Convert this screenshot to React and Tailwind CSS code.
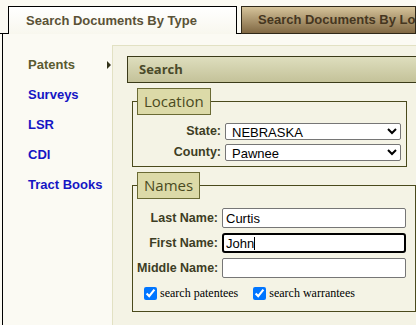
import React from 'react';

const navItems = [
    { label: 'Patents', active: true },
    { label: 'Surveys' },
    { label: 'LSR' },
    { label: 'CDI' },
    { label: 'Tract Books' },
];

const labelCls = "text-right font-bold text-[12.5px] leading-[17px] whitespace-nowrap text-[#3d3d24] font-['Liberation_Sans',Arial,sans-serif]";
const legendCls = "h-[27px] px-[6px] border border-[#6a6a34] bg-[#dcdaa8] text-[15px] leading-[25px] text-[#4a4a1e] font-['Open_Sans',sans-serif]";

const App = () => {
    return (
        <div className="w-[416px] h-[325px] overflow-hidden bg-[#fbfaf3] font-['Liberation_Sans',Arial,sans-serif]">
            {/* Tabs */}
            <div className="flex items-end h-[34px]">
                <div className="w-[8px] h-full border-b border-black" />
                <div className="w-[229px] h-[28px] shrink-0 border border-b-0 border-black bg-linear-to-b from-white to-[#f8f7ee] flex items-center pl-[17px]">
                    <span className="text-[13px] font-bold text-[#5a5236] whitespace-nowrap">Search Documents By Type</span>
                </div>
                <div className="w-[4px] h-full border-b border-black" />
                <div className="flex-1 h-[28px] border border-[#2f2818] bg-linear-to-b from-[#d6c49b] to-[#806843] flex items-center pl-[16px] overflow-hidden">
                    <span className="text-[13px] font-bold text-[#45361f] whitespace-nowrap">Search Documents By Lo</span>
                </div>
            </div>

            <div className="flex h-[291px] ml-[2px] border-l border-black">
                {/* Sidebar */}
                <div className="w-[109px] shrink-0 pt-[16px] flex flex-col">
                    {navItems.map((item) => (
                        <div key={item.label} className="h-[30px] flex items-center justify-between pl-[25px] pr-[1px]">
                            <span className={`text-[13px] font-bold ${item.active ? 'text-[#5a5a30]' : 'text-[#1515c4]'}`}>{item.label}</span>
                            {item.active && (
                                <span className="w-0 h-0 border-y-[4px] border-y-transparent border-l-[4px] border-l-[#33331a]" />
                            )}
                        </div>
                    ))}
                </div>

                {/* Content */}
                <div className="flex-1 mt-[11px] border-t border-l border-[#e2e1c3] bg-[#f4f3e5] pl-[14px] pt-[10px]">
                    <div className="h-[27px] border border-r-0 border-[#3a3a18] bg-linear-to-b from-[#dedebe] to-[#c4c299] flex items-center pl-[11px]">
                        <span className="text-[13px] font-bold text-[#4a4a2a] font-['Open_Sans',sans-serif]">Search</span>
                    </div>

                    {/* Location */}
                    <fieldset className="mt-[5px] ml-[5px] w-[275px] border border-[#4a4a1c] px-[4px] pb-[5px]">
                        <legend className={legendCls}>Location</legend>
                        <div className="grid grid-cols-[84px_1fr] gap-x-[4px] gap-y-[4px] items-center pt-[8px] pr-[1px]">
                            <label className={labelCls}>State:</label>
                            <select className="block h-[17px] text-[13px] bg-white border border-[#767676] rounded-[2px] px-[2px] text-black">
                                <option>NEBRASKA</option>
                            </select>
                            <label className={labelCls}>County:</label>
                            <select className="block h-[17px] text-[13px] bg-white border border-[#767676] rounded-[2px] px-[2px] text-black">
                                <option>Pawnee</option>
                            </select>
                        </div>
                    </fieldset>

                    {/* Names */}
                    <fieldset className="mt-[5px] ml-[5px] w-[275px] border border-[#4a4a1c] px-[4px] pb-[9px]">
                        <legend className={legendCls}>Names</legend>
                        <div className="grid grid-cols-[81px_1fr] gap-x-[4px] gap-y-[5px] items-center pt-[9px] pr-[5px]">
                            <label className={labelCls}>Last Name:</label>
                            <input readOnly value="Curtis" className="block h-[20px] text-[13px] bg-white border border-[#767676] rounded-[2px] px-[3px] text-black" />
                            <label className={labelCls}>First Name:</label>
                            <div className="relative h-[20px]">
                                <input readOnly value="John" className="block w-full h-[20px] text-[13px] bg-white border-2 border-black rounded-[3px] px-[2px] text-black outline-none" />
                                <span className="absolute left-[32px] top-[4px] w-px h-[13px] bg-black" />
                            </div>
                            <label className={labelCls}>Middle Name:</label>
                            <input readOnly value="" className="block h-[20px] text-[13px] bg-white border border-[#767676] rounded-[2px] px-[3px] text-black" />
                        </div>
                        <div className="flex items-center mt-[6px] pl-[7px] text-[12px] text-black font-['Liberation_Serif','Times_New_Roman',serif]">
                            <label className="flex items-center gap-[3px]">
                                <input type="checkbox" checked readOnly className="w-[13px] h-[13px] m-0" />
                                search patentees
                            </label>
                            <label className="flex items-center gap-[3px] ml-[15px]">
                                <input type="checkbox" checked readOnly className="w-[13px] h-[13px] m-0" />
                                search warrantees
                            </label>
                        </div>
                    </fieldset>
                </div>
            </div>
        </div>
    );
};

export default App;
